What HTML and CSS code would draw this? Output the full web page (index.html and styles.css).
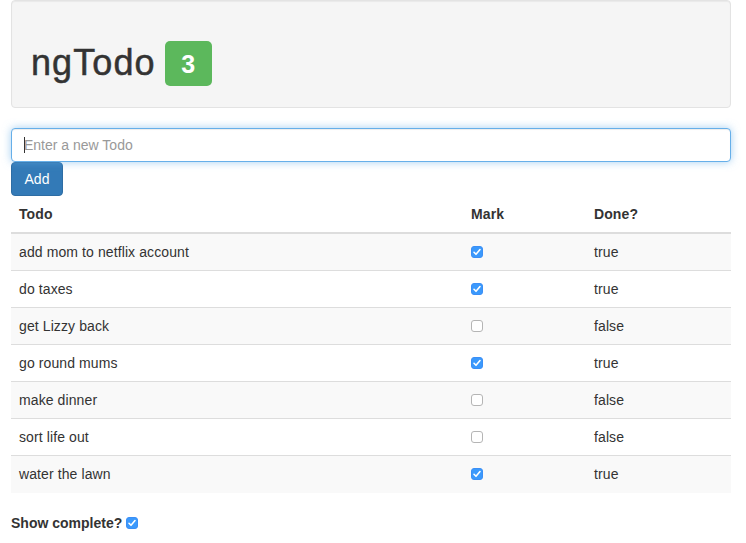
FILE: index.html
```html
<!DOCTYPE html>
<html>
<head>
<meta charset="utf-8">
<link rel="stylesheet" href="styles.css">
</head>
<body>
<div class="container">
  <div class="well">
    <h1 class="title">ngTodo <span class="badge">3</span></h1>
  </div>
  <div class="form">
    <div class="input-wrap">
      <input class="todo-input" type="text" placeholder="Enter a new Todo">
      <span class="caret"></span>
    </div>
    <button class="btn-add">Add</button>
  </div>
  <table class="todos">
    <thead>
      <tr><th class="c-todo">Todo</th><th class="c-mark">Mark</th><th class="c-done">Done?</th></tr>
    </thead>
    <tbody>
      <tr><td>add mom to netflix account</td><td><input type="checkbox" class="cb" checked></td><td>true</td></tr>
      <tr><td>do taxes</td><td><input type="checkbox" class="cb" checked></td><td>true</td></tr>
      <tr><td>get Lizzy back</td><td><input type="checkbox" class="cb"></td><td>false</td></tr>
      <tr><td>go round mums</td><td><input type="checkbox" class="cb" checked></td><td>true</td></tr>
      <tr><td>make dinner</td><td><input type="checkbox" class="cb"></td><td>false</td></tr>
      <tr><td>sort life out</td><td><input type="checkbox" class="cb"></td><td>false</td></tr>
      <tr><td>water the lawn</td><td><input type="checkbox" class="cb" checked></td><td>true</td></tr>
    </tbody>
  </table>
  <label class="show"><span>Show complete?</span><input type="checkbox" class="cb" checked></label>
</div>
</body>
</html>
```
FILE: styles.css
```css
* { box-sizing: border-box; }
html, body { margin: 0; padding: 0; background: #fff; }
body {
  font-family: "Liberation Sans", Arial, sans-serif;
  font-size: 14px;
  line-height: 20px;
  color: #333;
  letter-spacing: 0.1px;
}
.container {
  width: 720px;
  margin-left: 11px;
}
.well {
  background: #f5f5f5;
  border: 1px solid #e3e3e3;
  border-radius: 4px;
  box-shadow: inset 0 1px 1px rgba(0,0,0,0.05);
  padding: 19px;
  height: 108px;
  margin-bottom: 20px;
}
.title {
  margin: 20px 0 0 0;
  font-size: 36px;
  font-weight: 500;
  line-height: 40px;
  display: flex;
  align-items: center;
  gap: 9px;
  letter-spacing: 1.1px;
  -webkit-text-stroke: 0.5px #333;
}
.badge {
  display: inline-flex;
  align-items: center;
  justify-content: center;
  width: 47px;
  height: 45px;
  margin-top: 1px;
  background: #5cb85c;
  color: #fff;
  border-radius: 5px;
  font-size: 25px;
  font-weight: bold;
  letter-spacing: 0;
  -webkit-text-stroke: 0;
}
.form { display: flex; flex-direction: column; align-items: flex-start; }
.input-wrap { position: relative; width: 720px; }
.todo-input {
  display: block;
  width: 720px;
  height: 34px;
  padding: 6px 12px;
  font-family: inherit;
  font-size: 14px;
  color: #555;
  border: 1px solid #66afe9;
  border-radius: 4px;
  outline: none;
  box-shadow: inset 0 1px 1px rgba(0,0,0,0.075), 0 0 8px rgba(102,175,233,0.6);
}
.todo-input::placeholder { color: #999; }
.caret {
  position: absolute;
  left: 13px;
  top: 9px;
  width: 1px;
  height: 16px;
  background: #333;
}
.btn-add {
  height: 34px;
  width: 52px;
  padding: 6px 12px;
  font-family: inherit;
  font-size: 14px;
  color: #fff;
  background: #337ab7;
  border: 1px solid #2e6da4;
  border-radius: 4px;
}
.todos {
  width: 720px;
  border-collapse: collapse;
  border-spacing: 0;
  margin-bottom: 20px;
}
.todos th {
  text-align: left;
  font-weight: bold;
  padding: 7px 8px 8px;
  border-bottom: 2px solid #ddd;
  height: 37px;
}
.todos td {
  padding: 8px;
  border-top: 1px solid #ddd;
  height: 37px;
}
.todos tbody tr:nth-child(odd) { background: #f9f9f9; }
.todos tbody tr:first-child td { border-top: 0; }
.c-todo { width: 452px; }
.c-mark { width: 123px; }
.cb {
  -webkit-appearance: none;
  appearance: none;
  width: 12px;
  height: 12px;
  margin: 0;
  vertical-align: -1px;
  border: 1px solid #b5b5b5;
  border-radius: 3px;
  background: #fff;
}
.cb:checked {
  border-color: #3b8ff6;
  background: #3b99fc url("data:image/svg+xml;utf8,<svg xmlns='http://www.w3.org/2000/svg' viewBox='0 0 12 12'><path d='M3 6.3 L5 8.3 L9 3.6' fill='none' stroke='white' stroke-width='1.6' stroke-linecap='round' stroke-linejoin='round'/></svg>") center/12px 12px no-repeat;
}
.show {
  display: inline-flex;
  align-items: center;
  gap: 4px;
  font-weight: bold;
  letter-spacing: 0;
  margin-top: -1px;
}
.show .cb { margin-top: 1px; }
```
